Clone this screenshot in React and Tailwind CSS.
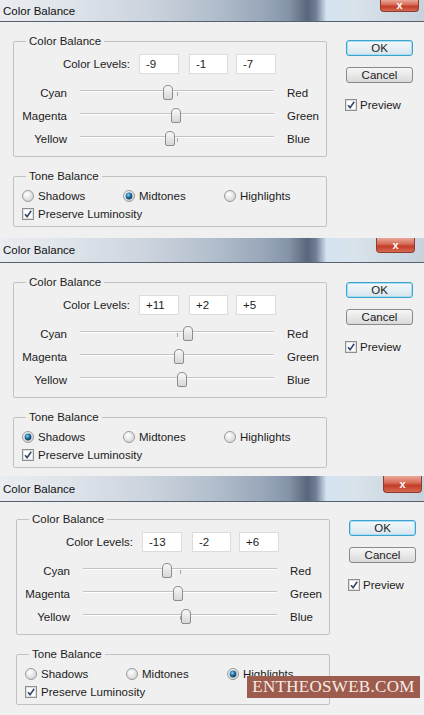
import React from "react";

const FONT = "font-['Liberation_Sans',Arial,sans-serif]";

function Radio({ on }) {
  return (
    <svg width="12" height="12" viewBox="0 0 12 12" className="shrink-0">
      <defs>
        <radialGradient id="rOff" cx="40%" cy="35%" r="70%">
          <stop offset="0%" stopColor="#ffffff" />
          <stop offset="100%" stopColor="#d2d2d2" />
        </radialGradient>
        <radialGradient id="rOn" cx="40%" cy="35%" r="65%">
          <stop offset="0%" stopColor="#9fd8f5" />
          <stop offset="45%" stopColor="#2a7db3" />
          <stop offset="100%" stopColor="#0b3a5e" />
        </radialGradient>
      </defs>
      <circle cx="6" cy="6" r="5.5" fill="url(#rOff)" stroke="#9b9b9b" strokeWidth="1" />
      {on && <circle cx="6" cy="6" r="3.4" fill="url(#rOn)" />}
    </svg>
  );
}

function Check() {
  return (
    <svg width="12" height="12" viewBox="0 0 12 12" className="shrink-0">
      <rect x="0.5" y="0.5" width="11" height="11" fill="#f5f5f5" stroke="#8e8f8f" />
      <rect x="1.5" y="1.5" width="9" height="9" fill="#ffffff" stroke="#e0e0e0" />
      <path d="M3 6.2 L5.1 8.6 L9.2 2.8" fill="none" stroke="#34466b" strokeWidth="1.6" />
    </svg>
  );
}

function Thumb() {
  return (
    <svg width="10" height="15" viewBox="0 0 10 15">
      <defs>
        <linearGradient id="th" x1="0" y1="0" x2="0" y2="1">
          <stop offset="0%" stopColor="#fafafa" />
          <stop offset="100%" stopColor="#d6d6d6" />
        </linearGradient>
      </defs>
      <path
        d="M0.5 5 Q0.5 0.5 5 0.5 Q9.5 0.5 9.5 5 L9.5 13 Q9.5 14.5 8 14.5 L2 14.5 Q0.5 14.5 0.5 13 Z"
        fill="url(#th)"
        stroke="#8c8c8c"
      />
    </svg>
  );
}

function SliderRow({ left, right, value }) {
  const pos = 97 + value * 0.97;
  return (
    <div className="flex h-[23px] items-center">
      <span className="w-[53px] text-right">{left}</span>
      <div className="relative ml-[13px] h-[16px] w-[194px] pt-[5px]">
        <div className="h-[2px] border-b border-white bg-[#c3c3c3]" />
        <div className="absolute left-[97px] top-[7px] h-[4px] w-px bg-[#a8a8a8]" />
        <div className="absolute top-0" style={{ left: pos - 5 }}>
          <Thumb />
        </div>
      </div>
      <span className="ml-[13px]">{right}</span>
    </div>
  );
}

function Input({ v, w }) {
  return (
    <div className={`flex h-[20px] items-center border border-[#dcdcdc] bg-white pl-[6px] ${w}`}>
      {v}
    </div>
  );
}

function Dialog({ d }) {
  return (
    <div className={`relative flex flex-col overflow-hidden bg-[#f0f0f0] ${d.h}`}>
      <div
        className={`flex shrink-0 items-start border-b border-[#56606f] bg-[linear-gradient(90deg,#e9ecf0_0%,#e0e5eb_15%,#cbd3dd_35%,#b3bfcd_50%,#98a7b9_62%,#8594a9_68%,#59667c_72.5%,#6f7e95_74.5%,#d3e3f1_77%,#d9e3ec_83%,#c8d2dc_100%)] ${d.titleH}`}
      >
        <span className="self-center pl-[3px] text-[11.5px] text-[#111]">Color Balance</span>
        <div
          className={`ml-auto flex w-[39px] items-center justify-center rounded-b-[4px] border border-t-0 border-[#8d3b30] bg-[linear-gradient(180deg,#eaa899_0%,#d8705c_40%,#c33d29_60%,#d66a52_100%)] text-[11px] font-bold leading-none text-white ${d.close}`}
        >
          x
        </div>
      </div>
      <div className={`flex ${d.pl}`}>
        <div className={`flex w-[314px] flex-col ${d.ptL}`}>
          <fieldset className="min-w-0 rounded-[2px] border border-[#c2c2c2] px-0 pb-[6px]">
            <legend className="ml-[12px] px-[3px] leading-[14px]">Color Balance</legend>
            <div className="mt-[6px] flex h-[20px] items-center">
              <span className="w-[116px] text-right">Color Levels:</span>
              <div className="ml-[9px]">
                <Input v={d.vals[0]} w="w-[40px]" />
              </div>
              <div className="ml-[10px]">
                <Input v={d.vals[1]} w="w-[39px]" />
              </div>
              <div className="ml-[8px]">
                <Input v={d.vals[2]} w="w-[40px]" />
              </div>
            </div>
            <div className="mt-[7px]">
              <SliderRow left="Cyan" right="Red" value={d.nums[0]} />
              <SliderRow left="Magenta" right="Green" value={d.nums[1]} />
              <SliderRow left="Yellow" right="Blue" value={d.nums[2]} />
            </div>
          </fieldset>
          <fieldset className="mt-[12px] min-w-0 rounded-[2px] border border-[#c2c2c2] px-0 pb-[5px]">
            <legend className="ml-[12px] px-[3px] leading-[14px]">Tone Balance</legend>
            <div className="mt-[6px] flex h-[14px] items-center pl-[8px]">
              {["Shadows", "Midtones", "Highlights"].map((t) => (
                <div key={t} className="flex w-[101px] items-center gap-[4px]">
                  <Radio on={d.sel === t} />
                  <span>{t}</span>
                </div>
              ))}
            </div>
            <div className="mt-[4px] flex h-[14px] items-center gap-[4px] pl-[8px]">
              <Check />
              <span>Preserve Luminosity</span>
            </div>
          </fieldset>
        </div>
        <div className={`ml-[19px] flex w-[67px] flex-col ${d.ptR}`}>
          <div className="flex h-[16px] items-center justify-center rounded-[3px] border border-[#3ca2cf] bg-[linear-gradient(180deg,#f4f9fc_0%,#e6eff4_50%,#d5e4ec_100%)] shadow-[inset_0_0_0_1px_#a9def2]">
            OK
          </div>
          <div className="mt-[11px] flex h-[16px] items-center justify-center rounded-[3px] border border-[#8a8a8a] bg-[linear-gradient(180deg,#f6f6f6_0%,#e9e9e9_50%,#d9d9d9_100%)]">
            Cancel
          </div>
          <div className="mt-[15px] flex h-[13px] items-center gap-[3px] -ml-px">
            <Check />
            <span>Preview</span>
          </div>
        </div>
      </div>
    </div>
  );
}

const DIALOGS = [
  {
    h: "h-[238px]",
    titleH: "h-[22px]",
    close: "h-[12px] mr-[5px]",
    pl: "pl-[13px]",
    ptL: "pt-[12px]",
    ptR: "pt-[18px]",
    vals: ["-9", "-1", "-7"],
    nums: [-9, -1, -7],
    sel: "Midtones",
  },
  {
    h: "h-[238px]",
    titleH: "h-[25px]",
    close: "h-[15px] mr-[9px]",
    pl: "pl-[13px]",
    ptL: "pt-[12px]",
    ptR: "pt-[19px]",
    vals: ["+11", "+2", "+5"],
    nums: [11, 2, 5],
    sel: "Shadows",
  },
  {
    h: "h-[239px]",
    titleH: "h-[26px]",
    close: "h-[17px] mr-[2px]",
    pl: "pl-[16px]",
    ptL: "pt-[10px]",
    ptR: "pt-[18px]",
    vals: ["-13", "-2", "+6"],
    nums: [-13, -2, 6],
    sel: "Highlights",
  },
];

export default function App() {
  return (
    <div className={`relative h-[715px] w-[424px] overflow-hidden bg-[#f0f0f0] text-[11.5px] leading-[14px] text-[#1c1c1c] ${FONT}`}>
      {DIALOGS.map((d, i) => (
        <Dialog key={i} d={d} />
      ))}
      <div className="absolute left-[247px] top-[676px] flex h-[22px] w-[173px] items-center justify-center bg-[#9d5c4d] font-['Liberation_Serif',serif] text-[17px] tracking-[0.3px] text-[#f6ebe6]">
        ENTHEOSWEB.COM
      </div>
    </div>
  );
}
